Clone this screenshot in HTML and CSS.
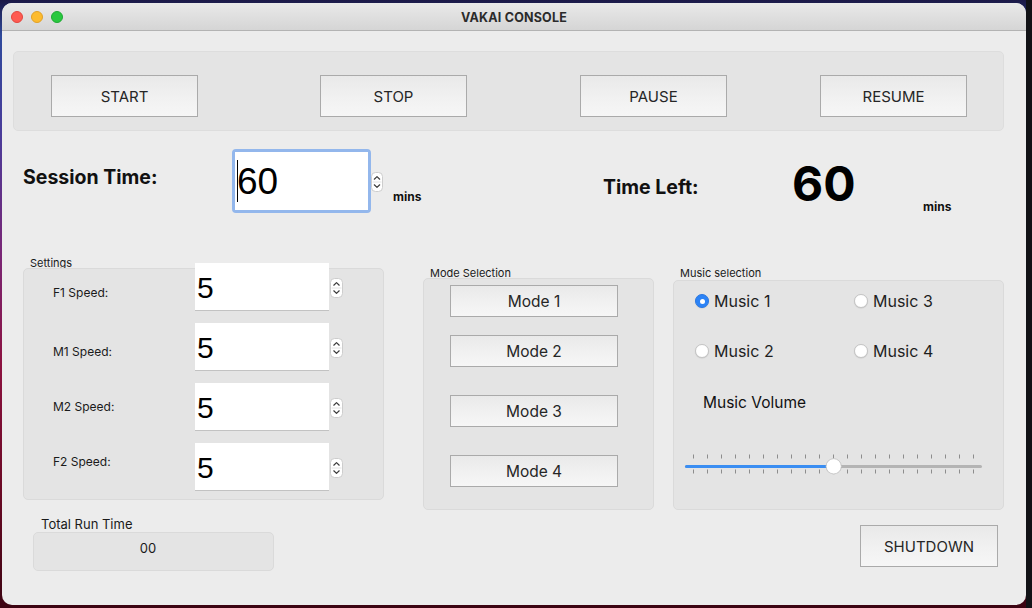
FILE: index.html
```html
<!DOCTYPE html>
<html lang="en">
<head>
<meta charset="utf-8">
<title>VAKAI CONSOLE</title>
<link rel="stylesheet" href="styles.css">
</head>
<body>
<div class="window">
  <div class="titlebar">
    <div class="lights">
      <span class="light light-red"></span>
      <span class="light light-yellow"></span>
      <span class="light light-green"></span>
    </div>
    <div class="title">VAKAI CONSOLE</div>
    <div></div>
  </div>

  <div class="content">
    <div class="toolbar">
      <button class="btn btn-ctrl">START</button>
      <button class="btn btn-ctrl gap-1">STOP</button>
      <button class="btn btn-ctrl gap-2">PAUSE</button>
      <button class="btn btn-ctrl gap-3">RESUME</button>
    </div>

    <div class="time-row">
      <div class="session-label">Session Time:</div>
      <div class="focus-ring">
        <div class="spin-field spin-big"><span class="caret"></span><span class="spin-text">60</span></div>
      </div>
      <svg class="stepper stepper-session" width="12" height="20" viewBox="0 0 12 20">
        <rect x="0.5" y="0.5" width="11" height="19" rx="4" fill="#fff" stroke="#cdcdcd"/>
        <line x1="1.5" y1="10" x2="10.5" y2="10" stroke="#e4e4e4"/>
        <path d="M3.3 7.2 L6 4.6 L8.7 7.2" fill="none" stroke="#3a3a3a" stroke-width="1.2" stroke-linecap="round" stroke-linejoin="round"/>
        <path d="M3.3 12.8 L6 15.4 L8.7 12.8" fill="none" stroke="#3a3a3a" stroke-width="1.2" stroke-linecap="round" stroke-linejoin="round"/>
      </svg>
      <div class="unit unit-session">mins</div>
      <div class="timeleft-label">Time Left:</div>
      <div class="timeleft-value">60</div>
      <div class="unit unit-left">mins</div>
    </div>

    <div class="panels">
      <section class="col col-settings">
        <div class="legend">Settings</div>
        <div class="group group-settings">
          <div class="speed-rows">
            <div class="speed-row">
              <div class="speed-label off-f1">F1 Speed:</div>
              <div class="spin-field spin-small">5</div>
              <svg class="stepper stepper-small" width="13" height="20" viewBox="0 0 13 20">
                <rect x="0.5" y="0.5" width="12" height="19" rx="4" fill="#fff" stroke="#cdcdcd"/>
                <line x1="1.5" y1="10" x2="11.5" y2="10" stroke="#e4e4e4"/>
                <path d="M3.8 7.2 L6.5 4.6 L9.2 7.2" fill="none" stroke="#3a3a3a" stroke-width="1.2" stroke-linecap="round" stroke-linejoin="round"/>
                <path d="M3.8 12.8 L6.5 15.4 L9.2 12.8" fill="none" stroke="#3a3a3a" stroke-width="1.2" stroke-linecap="round" stroke-linejoin="round"/>
              </svg>
            </div>
            <div class="speed-row">
              <div class="speed-label off-m1">M1 Speed:</div>
              <div class="spin-field spin-small">5</div>
              <svg class="stepper stepper-small" width="13" height="20" viewBox="0 0 13 20">
                <rect x="0.5" y="0.5" width="12" height="19" rx="4" fill="#fff" stroke="#cdcdcd"/>
                <line x1="1.5" y1="10" x2="11.5" y2="10" stroke="#e4e4e4"/>
                <path d="M3.8 7.2 L6.5 4.6 L9.2 7.2" fill="none" stroke="#3a3a3a" stroke-width="1.2" stroke-linecap="round" stroke-linejoin="round"/>
                <path d="M3.8 12.8 L6.5 15.4 L9.2 12.8" fill="none" stroke="#3a3a3a" stroke-width="1.2" stroke-linecap="round" stroke-linejoin="round"/>
              </svg>
            </div>
            <div class="speed-row">
              <div class="speed-label off-m2">M2 Speed:</div>
              <div class="spin-field spin-small">5</div>
              <svg class="stepper stepper-small" width="13" height="20" viewBox="0 0 13 20">
                <rect x="0.5" y="0.5" width="12" height="19" rx="4" fill="#fff" stroke="#cdcdcd"/>
                <line x1="1.5" y1="10" x2="11.5" y2="10" stroke="#e4e4e4"/>
                <path d="M3.8 7.2 L6.5 4.6 L9.2 7.2" fill="none" stroke="#3a3a3a" stroke-width="1.2" stroke-linecap="round" stroke-linejoin="round"/>
                <path d="M3.8 12.8 L6.5 15.4 L9.2 12.8" fill="none" stroke="#3a3a3a" stroke-width="1.2" stroke-linecap="round" stroke-linejoin="round"/>
              </svg>
            </div>
            <div class="speed-row">
              <div class="speed-label off-f2">F2 Speed:</div>
              <div class="spin-field spin-small">5</div>
              <svg class="stepper stepper-small" width="13" height="20" viewBox="0 0 13 20">
                <rect x="0.5" y="0.5" width="12" height="19" rx="4" fill="#fff" stroke="#cdcdcd"/>
                <line x1="1.5" y1="10" x2="11.5" y2="10" stroke="#e4e4e4"/>
                <path d="M3.8 7.2 L6.5 4.6 L9.2 7.2" fill="none" stroke="#3a3a3a" stroke-width="1.2" stroke-linecap="round" stroke-linejoin="round"/>
                <path d="M3.8 12.8 L6.5 15.4 L9.2 12.8" fill="none" stroke="#3a3a3a" stroke-width="1.2" stroke-linecap="round" stroke-linejoin="round"/>
              </svg>
            </div>
          </div>
        </div>
      </section>

      <section class="col col-modes">
        <div class="legend">Mode Selection</div>
        <div class="group group-modes">
          <button class="btn btn-mode">Mode 1</button>
          <button class="btn btn-mode mode-gap-s">Mode 2</button>
          <button class="btn btn-mode mode-gap-l">Mode 3</button>
          <button class="btn btn-mode mode-gap-l">Mode 4</button>
        </div>
      </section>

      <section class="col col-music">
        <div class="legend legend-music">Music selection</div>
        <div class="group group-music">
          <div class="radio-grid">
            <label class="radio"><span class="radio-dot checked"></span>Music 1</label>
            <label class="radio"><span class="radio-dot"></span>Music 3</label>
            <label class="radio"><span class="radio-dot"></span>Music 2</label>
            <label class="radio"><span class="radio-dot"></span>Music 4</label>
          </div>
          <div class="volume-label">Music Volume</div>
          <svg class="slider" width="300" height="24" viewBox="0 0 300 24">
            <g stroke="#8d8d8d" stroke-width="1">
              <line x1="9.5" y1="1.5" x2="9.5" y2="5.5"/><line x1="23.5" y1="1.5" x2="23.5" y2="5.5"/><line x1="37.5" y1="1.5" x2="37.5" y2="5.5"/><line x1="51.5" y1="1.5" x2="51.5" y2="5.5"/><line x1="65.5" y1="1.5" x2="65.5" y2="5.5"/><line x1="79.5" y1="1.5" x2="79.5" y2="5.5"/><line x1="93.5" y1="1.5" x2="93.5" y2="5.5"/><line x1="107.5" y1="1.5" x2="107.5" y2="5.5"/><line x1="121.5" y1="1.5" x2="121.5" y2="5.5"/><line x1="135.5" y1="1.5" x2="135.5" y2="5.5"/><line x1="149.5" y1="1.5" x2="149.5" y2="5.5"/><line x1="163.5" y1="1.5" x2="163.5" y2="5.5"/><line x1="177.5" y1="1.5" x2="177.5" y2="5.5"/><line x1="191.5" y1="1.5" x2="191.5" y2="5.5"/><line x1="205.5" y1="1.5" x2="205.5" y2="5.5"/><line x1="219.5" y1="1.5" x2="219.5" y2="5.5"/><line x1="233.5" y1="1.5" x2="233.5" y2="5.5"/><line x1="247.5" y1="1.5" x2="247.5" y2="5.5"/><line x1="261.5" y1="1.5" x2="261.5" y2="5.5"/><line x1="275.5" y1="1.5" x2="275.5" y2="5.5"/><line x1="289.5" y1="1.5" x2="289.5" y2="5.5"/>
              <line x1="9.5" y1="16.5" x2="9.5" y2="20.5"/><line x1="23.5" y1="16.5" x2="23.5" y2="20.5"/><line x1="37.5" y1="16.5" x2="37.5" y2="20.5"/><line x1="51.5" y1="16.5" x2="51.5" y2="20.5"/><line x1="65.5" y1="16.5" x2="65.5" y2="20.5"/><line x1="79.5" y1="16.5" x2="79.5" y2="20.5"/><line x1="93.5" y1="16.5" x2="93.5" y2="20.5"/><line x1="107.5" y1="16.5" x2="107.5" y2="20.5"/><line x1="121.5" y1="16.5" x2="121.5" y2="20.5"/><line x1="135.5" y1="16.5" x2="135.5" y2="20.5"/><line x1="149.5" y1="16.5" x2="149.5" y2="20.5"/><line x1="163.5" y1="16.5" x2="163.5" y2="20.5"/><line x1="177.5" y1="16.5" x2="177.5" y2="20.5"/><line x1="191.5" y1="16.5" x2="191.5" y2="20.5"/><line x1="205.5" y1="16.5" x2="205.5" y2="20.5"/><line x1="219.5" y1="16.5" x2="219.5" y2="20.5"/><line x1="233.5" y1="16.5" x2="233.5" y2="20.5"/><line x1="247.5" y1="16.5" x2="247.5" y2="20.5"/><line x1="261.5" y1="16.5" x2="261.5" y2="20.5"/><line x1="275.5" y1="16.5" x2="275.5" y2="20.5"/><line x1="289.5" y1="16.5" x2="289.5" y2="20.5"/>
            </g>
            <rect x="1" y="12" width="297" height="3" rx="1.5" fill="#b4b4b4"/>
            <rect x="1" y="12" width="149" height="3" rx="1.5" fill="#3b8ef2"/>
            <circle cx="149.7" cy="13.4" r="8" fill="#000" opacity="0.12"/>
            <circle cx="149.7" cy="13.3" r="7.6" fill="#ffffff" stroke="#c6c6c6" stroke-width="0.8"/>
          </svg>
        </div>
      </section>
    </div>

    <div class="footer">
      <div class="runtime">
        <div class="runtime-label">Total Run Time</div>
        <div class="runtime-box">00</div>
      </div>
      <button class="btn btn-shutdown">SHUTDOWN</button>
    </div>
  </div>
</div>
</body>
</html>
```

FILE: styles.css
```css
* { box-sizing: border-box; }

html, body {
  margin: 0;
  padding: 0;
}

body {
  width: 1032px;
  height: 608px;
  overflow: hidden;
  font-family: "Inter", "Liberation Sans", sans-serif;
  color: #1e1e1e;
  background:
    linear-gradient(to right, rgba(0,0,0,0) 1026px, #111216 1026px),
    linear-gradient(180deg, #1b1947 0%, #2f4a9c 6%, #4a3c9a 22%, #7a2676 42%, #8c1240 60%, #6c0a26 80%, #3c0412 100%);
}

.window {
  margin: 3px 0 0 2px;
  width: 1024px;
  height: 602px;
  background: #ececec;
  border-radius: 10px;
  overflow: hidden;
  display: flex;
  flex-direction: column;
}

/* Title bar */
.titlebar {
  height: 28px;
  flex: none;
  display: grid;
  grid-template-columns: 1fr auto 1fr;
  align-items: center;
  background: linear-gradient(180deg, #e9e9e9 0%, #d5d5d5 100%);
  border-bottom: 1px solid #b3b3b3;
}

.lights {
  display: flex;
  gap: 8px;
  padding-left: 9px;
  margin-top: 1px;
}

.light {
  width: 12px;
  height: 12px;
  border-radius: 50%;
  display: block;
}
.light-red { background: #fe5b52; border: 0.5px solid #e2463f; }
.light-yellow { background: #fdbb2e; border: 0.5px solid #e0a028; }
.light-green { background: #29c83f; border: 0.5px solid #1fa934; }

.title {
  font-size: 12.5px;
  font-weight: 700;
  color: #2b2b2b;
  letter-spacing: 0.2px;
  margin-top: 2px;
}

/* Content */
.content {
  flex: 1;
  display: flex;
  flex-direction: column;
}

.btn {
  font-family: "Inter", "Liberation Sans", sans-serif;
  color: #262626;
  background: linear-gradient(180deg, #e9e9e9 0%, #f1f1f1 55%, #f6f6f6 100%);
  border: 1px solid #aaaaaa;
  border-radius: 0;
  padding: 0;
  display: flex;
  align-items: center;
  justify-content: center;
}

.toolbar {
  margin: 20px 0 0 11px;
  width: 991px;
  height: 80px;
  flex: none;
  background: #e4e4e4;
  border: 1px solid #dddddd;
  border-radius: 5px;
  display: flex;
  align-items: flex-start;
  padding: 23px 0 0 37px;
}

.btn-ctrl {
  width: 147px;
  height: 42px;
  font-size: 15px;
  flex: none;
  padding-top: 1px;
}
.gap-1 { margin-left: 122px; }
.gap-2 { margin-left: 113px; }
.gap-3 { margin-left: 93px; }

/* Time row */
.time-row {
  margin-top: 18px;
  height: 106px;
  flex: none;
  display: flex;
  align-items: flex-start;
}

.session-label {
  margin: 16px 0 0 21px;
  width: 209px;
  flex: none;
  font-size: 19.5px;
  line-height: 24px;
  font-weight: 700;
  color: #111;
}

.focus-ring {
  width: 139px;
  height: 64px;
  flex: none;
  border: 3px solid #93b7ec;
  border-radius: 4px;
  background: #93b7ec;
}

.spin-field {
  background: #ffffff;
  font-family: "Liberation Sans", "Inter", sans-serif;
  color: #000;
  display: flex;
  align-items: center;
}

.spin-big {
  width: 100%;
  height: 100%;
  font-size: 37px;
  padding: 1px 0 0 2px;
}

.caret {
  display: block;
  width: 1px;
  height: 42px;
  background: #000;
  margin-top: -2px;
}
.spin-text { margin-left: -1px; }

.stepper { flex: none; display: block; }
.stepper-session { margin-top: 23px; }

.unit {
  font-size: 12px;
  font-weight: 700;
  line-height: 14px;
  color: #111;
  flex: none;
}
.unit-session { margin: 41px 0 0 10px; width: 28px; }

.timeleft-label {
  margin: 26px 0 0 182px;
  width: 189px;
  flex: none;
  font-size: 19.5px;
  line-height: 24px;
  font-weight: 700;
  color: #111;
}

.timeleft-value {
  margin-top: 5px;
  width: 131px;
  flex: none;
  font-size: 48px;
  line-height: 60px;
  font-weight: 700;
  color: #000;
}
.unit-left { margin-top: 51px; }

/* Panels */
.panels {
  display: flex;
  align-items: flex-start;
  height: 255px;
  flex: none;
}

.col { flex: none; display: flex; flex-direction: column; }

.legend {
  font-size: 11px;
  height: 13px;
  line-height: 17px;
  margin-left: 7px;
  color: #1a1a1a;
}

.group {
  background: #e4e4e4;
  border: 1px solid #dadada;
  border-radius: 5px;
}

.col-settings { margin-left: 21px; width: 361px; }
.group-settings { height: 232px; }

.speed-rows {
  margin-top: -6px;
  display: flex;
  flex-direction: column;
  gap: 12px;
}

.speed-row {
  display: flex;
  align-items: flex-start;
  height: 48px;
}

.speed-label {
  width: 171px;
  padding-left: 29px;
  font-size: 12px;
  line-height: 14px;
  flex: none;
  color: #1a1a1a;
}
.off-f1 { margin-top: 23px; }
.off-m1 { margin-top: 22px; }
.off-m2 { margin-top: 17px; }
.off-f2 { margin-top: 12px; }

.spin-small {
  width: 134px;
  height: 48px;
  flex: none;
  font-size: 30px;
  padding: 3px 0 0 2px;
  border-bottom: 1px solid #c2c2c2;
}

.stepper-small { margin: 15px 0 0 1px; }

.col-modes { margin-left: 39px; width: 231px; margin-top: 10px; }
.group-modes {
  height: 232px;
  display: flex;
  flex-direction: column;
  align-items: flex-start;
  padding: 6px 0 0 26px;
}

.btn-mode {
  width: 168px;
  height: 32px;
  font-size: 15.5px;
  flex: none;
  padding-top: 1px;
}
.mode-gap-s { margin-top: 18px; }
.mode-gap-l { margin-top: 28px; }

.col-music { margin-left: 19px; width: 331px; margin-top: 10px; }
.legend-music { margin-bottom: 2px; }
.group-music {
  height: 230px;
  padding: 10px 0 0 21px;
  display: flex;
  flex-direction: column;
  align-items: flex-start;
}

.radio-grid {
  display: grid;
  grid-template-columns: 159px 120px;
  row-gap: 30px;
}

.radio {
  display: flex;
  align-items: center;
  gap: 5px;
  font-size: 16px;
  line-height: 20px;
  color: #1e1e1e;
}

.radio-dot {
  width: 14px;
  height: 14px;
  border-radius: 50%;
  background: #ffffff;
  border: 1px solid #c4c4c4;
  box-shadow: 0 0.5px 1px rgba(0,0,0,0.12);
  display: block;
  flex: none;
  position: relative;
}
.radio-dot.checked {
  background: #2c83f6;
  border-color: #2a78e2;
}
.radio-dot.checked::after {
  content: "";
  position: absolute;
  left: 3.5px;
  top: 3.5px;
  width: 5px;
  height: 5px;
  border-radius: 50%;
  background: #fff;
}

.volume-label {
  margin: 32px 0 0 8px;
  font-size: 15.5px;
  line-height: 20px;
  color: #111;
}

.slider {
  display: block;
  margin: 40px 0 0 -11px;
}

/* Footer */
.footer {
  display: flex;
  justify-content: space-between;
  align-items: flex-start;
  flex: none;
}

.runtime { display: flex; flex-direction: column; }

.runtime-label {
  margin: 7px 0 0 39px;
  font-size: 13px;
  line-height: 15px;
  color: #1a1a1a;
}

.runtime-box {
  margin-left: 31px;
  width: 241px;
  height: 39px;
  background: #e4e4e4;
  border: 1px solid #dadada;
  border-radius: 5px;
  display: flex;
  align-items: center;
  justify-content: center;
  padding: 0 11px 7px 0;
  font-size: 13px;
  color: #1a1a1a;
}

.btn-shutdown {
  width: 138px;
  height: 42px;
  font-size: 15px;
  margin: 15px 28px 0 0;
  padding-top: 1px;
}
```
